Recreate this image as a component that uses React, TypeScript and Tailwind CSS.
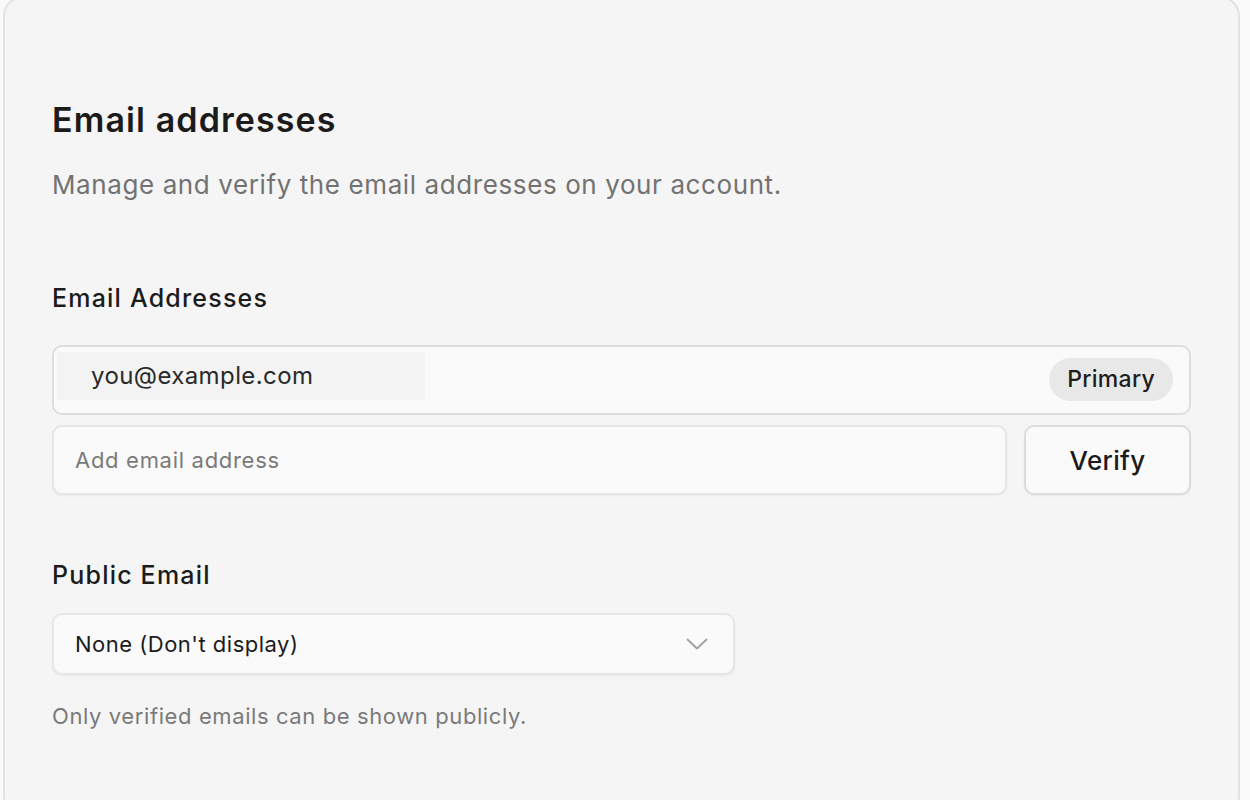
import React from "react";

export default function App() {
  return (
    <div
      className="min-h-[800px] w-[1250px] overflow-hidden bg-[#fafafa]"
      style={{ fontFamily: "Inter, 'Noto Sans', sans-serif" }}
    >
      <div className="ml-[3px] mr-[10px] -mt-[4px] h-[820px] rounded-[20px] border-2 border-[#e2e2e2] bg-[#f5f5f5] pl-[47px] pr-[47px] pt-[102px]">
        <h1 className="text-[34px] leading-[40px] font-semibold tracking-[1.1px] text-[#1b1b1b]">
          Email addresses
        </h1>
        <p className="mt-[27px] text-[26px] leading-[36px] tracking-[0.6px] text-[#727272]">
          Manage and verify the email addresses on your account.
        </p>

        <div className="mt-[79px] text-[25px] leading-[32px] font-medium tracking-[1.2px] text-[#1b1b1b]">
          Email Addresses
        </div>

        <div className="mt-[31px] flex h-[70px] items-start justify-between rounded-[10px] border-2 border-[#dedede] bg-[#fafafa] pl-[3px] pr-[16px]">
          <div className="mt-[5px] flex h-[48px] w-[368px] items-center bg-[#f3f3f4] pl-[34px] text-[24px] tracking-[0.4px] text-[#2a2a2a]">
            you@example.com
          </div>
          <span className="mt-[11px] flex h-[43px] items-center rounded-full bg-[#e8e8e8] px-[18px] text-[23px] font-medium tracking-[0.3px] text-[#1e1e1e]">
            Primary
          </span>
        </div>

        <div className="mt-[10px] flex gap-[17px]">
          <div className="flex h-[70px] flex-1 items-center rounded-[10px] border-2 border-[#e6e6e6] bg-[#fafafa] pl-[21px] text-[22px] tracking-[0.7px] text-[#7a7a7a] shadow-[0_1px_2px_rgba(0,0,0,0.05)]">
            Add email address
          </div>
          <button className="flex h-[70px] w-[167px] items-center justify-center rounded-[10px] border-2 border-[#dcdcdc] bg-[#fafafa] text-[26px] font-medium tracking-[0.3px] text-[#1b1b1b] shadow-[0_1px_2px_rgba(0,0,0,0.06)]">
            Verify
          </button>
        </div>

        <div className="mt-[64px] text-[25px] leading-[32px] font-medium tracking-[1.2px] text-[#1b1b1b]">
          Public Email
        </div>

        <div className="mt-[22px] flex h-[62px] w-[683px] items-center justify-between rounded-[10px] border-2 border-[#e6e6e6] bg-[#fafafa] pl-[21px] pr-[25px] text-[22px] tracking-[0.5px] text-[#1b1b1b] shadow-[0_1px_2px_rgba(0,0,0,0.06)]">
          <span>None (Don't display)</span>
          <svg width="22" height="12" viewBox="0 0 22 12" fill="none" stroke="#a0a0a0" strokeWidth="1.8" strokeLinecap="round" strokeLinejoin="round">
            <path d="M1.5 1.5L11 10.5L20.5 1.5" />
          </svg>
        </div>

        <p className="mt-[26px] text-[22px] leading-[30px] tracking-[0.6px] text-[#7a7a7a]">
          Only verified emails can be shown publicly.
        </p>
      </div>
    </div>
  );
}
